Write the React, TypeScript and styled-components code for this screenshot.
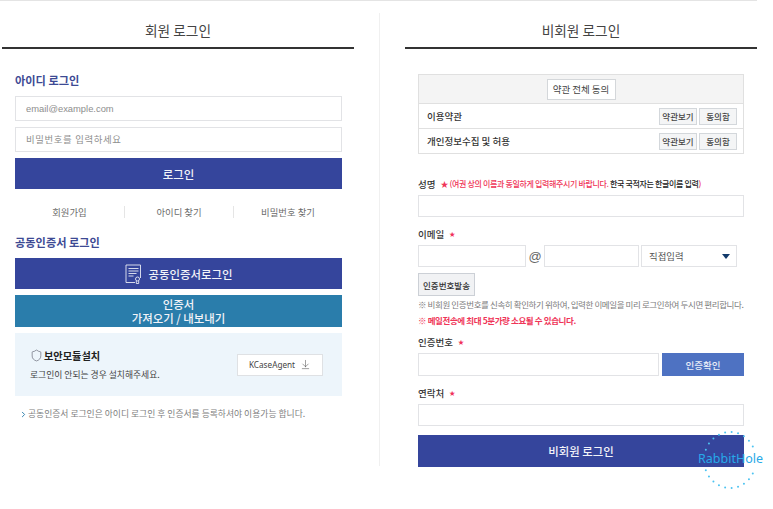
import React from 'react';
import styled, { createGlobalStyle } from 'styled-components';
import { ArrowDownToLine, Shield, ChevronRight } from 'lucide-react';

const GlobalStyle = createGlobalStyle`
  html, body {
    margin: 0;
    padding: 0;
    background: #fff;
  }
  body {
    font-family: "Noto Sans CJK KR", "Noto Sans", sans-serif;
    color: #333;
  }
  * {
    box-sizing: border-box;
  }
`;

const Page = styled.div`
  position: relative;
  width: 773px;
  height: 509px;
  overflow: hidden;
`;

const TopRule = styled.div`
  width: 757px;
  height: 1px;
  background: #e4e4e4;
`;

const Columns = styled.div`
  display: grid;
  grid-template-columns: 380px 393px;
  padding-top: 12px;
`;

const LeftColumn = styled.section`
  height: 453px;
  padding-left: 2px;
  border-right: 1px solid #f0f0f0;
`;

const RightColumn = styled.section`
  padding-left: 25px;
`;

const PanelTitle = styled.h2`
  width: 352px;
  height: 36px;
  margin: 0;
  padding-top: 5px;
  border-bottom: 2px solid #333;
  font-size: 13.7px;
  line-height: 24px;
  font-weight: 400;
  color: #444;
  text-align: center;
`;

const LeftBody = styled.div`
  width: 327px;
  margin: 23px 0 0 13px;
`;

const RightBody = styled.div`
  width: 326px;
  margin: 25px 0 0 13px;
`;

const SectionTitle = styled.h3`
  margin: 0 0 7px;
  font-size: 11.2px;
  line-height: 17px;
  font-weight: 700;
  color: #3d4a94;
`;

const TextField = styled.input<{ $w?: number; $h?: number }>`
  display: block;
  width: ${p => (p.$w ? `${p.$w}px` : '100%')};
  height: ${p => p.$h ?? 25}px;
  padding: 0 10px;
  border: 1px solid #e2e3e6;
  background: #fff;
  font-family: "Liberation Sans", "Noto Sans CJK KR", sans-serif;
  font-size: 9.4px;
  outline: none;
  &::placeholder {
    color: #8e8e8e;
    opacity: 1;
  }
`;

const PasswordField = styled(TextField)`
  letter-spacing: 0.6px;
`;

const FieldStack = styled.div`
  display: flex;
  flex-direction: column;
  gap: 6px;
`;

const PrimaryButton = styled.button<{ $h: number; $bg?: string }>`
  display: flex;
  align-items: center;
  justify-content: center;
  gap: 7px;
  width: 100%;
  height: ${p => p.$h}px;
  padding: 0;
  border: 0;
  background: ${p => p.$bg ?? '#35459c'};
  color: #f2f3f8;
  font-family: inherit;
  font-size: 11.4px;
  line-height: 14px;
  font-weight: 500;
`;

const LinkRow = styled.nav`
  display: grid;
  grid-template-columns: repeat(3, 1fr);
  margin: 17px 0 16px;
`;

const LinkItem = styled.a`
  height: 12px;
  font-size: 9.4px;
  line-height: 12px;
  color: #6b6b6b;
  text-align: center;
  & + & {
    border-left: 1px solid #e5e5e5;
  }
`;

const CertStack = styled.div`
  display: flex;
  flex-direction: column;
  gap: 6px;
`;

const InstallBox = styled.div`
  display: flex;
  align-items: center;
  justify-content: space-between;
  height: 63px;
  padding: 0 19px 0 15px;
  background: #edf5fb;
`;

const InstallHeading = styled.div`
  display: flex;
  align-items: center;
  gap: 1px;
  font-size: 10.2px;
  line-height: 14px;
  font-weight: 700;
  color: #222;
`;

const InstallText = styled.p`
  margin: 6px 0 0;
  font-size: 8.8px;
  line-height: 12px;
  color: #444;
`;

const AgentButton = styled.button`
  display: flex;
  align-items: center;
  justify-content: center;
  gap: 5px;
  width: 86px;
  height: 22px;
  padding: 0;
  border: 1px solid #dfe1e4;
  background: #fff;
  font-family: "Noto Sans", sans-serif;
  font-size: 8.2px;
  color: #444;
`;

const CertNote = styled.p`
  display: flex;
  align-items: center;
  margin: 11px 0 0;
  padding-left: 4px;
  font-size: 8.8px;
  line-height: 14px;
  color: #808080;
`;

const TermsTable = styled.div`
  border: 1px solid #e0e0e0;
`;

const TermsHead = styled.div`
  display: flex;
  align-items: center;
  justify-content: center;
  height: 28px;
  background: #f4f4f4;
`;

const AgreeAllButton = styled.button`
  width: 69px;
  height: 21px;
  padding: 0;
  border: 1px solid #d4d7da;
  background: #fff;
  font-family: inherit;
  font-size: 9.5px;
  color: #444;
`;

const TermsRow = styled.div`
  display: flex;
  align-items: center;
  justify-content: space-between;
  height: 25px;
  padding: 0 6px 0 8px;
  border-top: 1px solid #e0e0e0;
  font-size: 9.5px;
  font-weight: 500;
  color: #333;
`;

const TermsActions = styled.div`
  display: flex;
  gap: 2px;
`;

const SmallButton = styled.button`
  width: 38px;
  height: 17px;
  padding: 0;
  border: 1px solid #d3d7db;
  background: #f4f5f6;
  font-family: inherit;
  font-size: 8.5px;
  font-weight: 500;
  color: #444;
`;

const FieldLabel = styled.div<{ $top: number }>`
  display: flex;
  align-items: center;
  gap: 5px;
  height: 14px;
  margin: ${p => p.$top}px 0 4px;
  font-size: 9.5px;
  line-height: 14px;
  font-weight: 500;
  color: #333;
`;

const Star = styled.span`
  color: #f0325a;
  font-size: 6px;
  line-height: 14px;
`;

const LabelHint = styled.span`
  font-size: 8px;
  letter-spacing: -0.35px;
  font-weight: 500;
  color: #222;
  em {
    font-style: normal;
    color: #ef3558;
  }
`;

const InlineRow = styled.div`
  display: flex;
  align-items: center;
`;

const AtSign = styled.span`
  width: 18px;
  font-family: "Liberation Sans", sans-serif;
  font-size: 13px;
  color: #666;
  text-align: center;
`;

const SelectBox = styled.div`
  display: flex;
  align-items: center;
  justify-content: space-between;
  width: 96px;
  height: 22px;
  margin-left: 2px;
  padding: 0 6px 0 7px;
  border: 1px solid #e2e3e6;
  font-size: 9.4px;
  color: #555;
`;

const Caret = styled.span`
  width: 0;
  height: 0;
  border-left: 4px solid transparent;
  border-right: 4px solid transparent;
  border-top: 5px solid #123a6b;
`;

const SendCodeButton = styled.button`
  display: block;
  width: 57px;
  height: 23px;
  margin-top: 6px;
  padding: 0;
  border: 1px solid #ccd0d6;
  background: #f1f2f4;
  font-family: inherit;
  font-size: 8.5px;
  font-weight: 500;
  color: #333;
`;

const Notice = styled.p<{ $alert?: boolean }>`
  margin: ${p => (p.$alert ? '3px' : '2px')} 0 0;
  font-size: 8.5px;
  line-height: 13px;
  letter-spacing: -0.4px;
  white-space: nowrap;
  font-weight: ${p => (p.$alert ? 700 : 400)};
  color: ${p => (p.$alert ? '#ef3558' : '#7b7b7b')};
`;

const ConfirmButton = styled.button`
  width: 82px;
  height: 23px;
  margin-left: 3px;
  padding: 0;
  border: 0;
  background: #4e72c2;
  font-family: inherit;
  font-size: 9.5px;
  font-weight: 500;
  color: #e9eef8;
`;

const GuestLogin = styled(PrimaryButton)`
  margin-top: 9px;
`;

const Watermark = styled.div`
  position: absolute;
  left: 697px;
  top: 431px;
  width: 66px;
  height: 60px;
  color: #27a9e8;
  svg {
    position: absolute;
    inset: 0;
  }
`;

const WatermarkText = styled.span`
  position: absolute;
  left: 1px;
  top: 19px;
  font-family: "Noto Sans", sans-serif;
  font-size: 12.5px;
  line-height: 18px;
  white-space: nowrap;
`;

// 점선 원: 글자가 지나가는 좌우 구간은 비워 둠
const ringDots = Array.from({ length: 25 }, (_, i) => (i * 360) / 25)
  .filter(deg => Math.abs(Math.sin((deg * Math.PI) / 180)) > 0.3)
  .map(deg => ({
    cx: 33 + 26 * Math.cos((deg * Math.PI) / 180),
    cy: 29 + 28 * Math.sin((deg * Math.PI) / 180),
  }));

const CertIcon = () => (
  <svg width="17" height="20" viewBox="0 0 17 20" fill="none" stroke="#e8eaf4" strokeWidth="0.9">
    <path d="M10 18.5H1V1h14.5v13" />
    <path d="M3.5 4.5h10M3.5 7h10M3.5 9.5h8M3.5 12h5" />
    <circle cx="12.5" cy="15" r="2" />
    <path d="M11.3 17v2.5h2.4V17" />
  </svg>
);

export default function App() {
  return (
    <Page>
      <GlobalStyle />
      <TopRule />
      <Columns>
        <LeftColumn>
          <PanelTitle>회원 로그인</PanelTitle>
          <LeftBody>
            <SectionTitle>아이디 로그인</SectionTitle>
            <FieldStack>
              <TextField placeholder="email@example.com" />
              <PasswordField placeholder="비밀번호를 입력하세요" />
              <PrimaryButton $h={31}>로그인</PrimaryButton>
            </FieldStack>
            <LinkRow>
              <LinkItem>회원가입</LinkItem>
              <LinkItem>아이디 찾기</LinkItem>
              <LinkItem>비밀번호 찾기</LinkItem>
            </LinkRow>
            <SectionTitle>공동인증서 로그인</SectionTitle>
            <CertStack>
              <PrimaryButton $h={31}>
                <CertIcon />
                공동인증서로그인
              </PrimaryButton>
              <PrimaryButton $h={32} $bg="#2a7dab">
                인증서
                <br />
                가져오기 / 내보내기
              </PrimaryButton>
              <InstallBox>
                <div>
                  <InstallHeading>
                    <Shield size={13} strokeWidth={1} color="#445" />
                    보안모듈설치
                  </InstallHeading>
                  <InstallText>로그인이 안되는 경우 설치해주세요.</InstallText>
                </div>
                <AgentButton>
                  KCaseAgent
                  <ArrowDownToLine size={11} strokeWidth={1.1} color="#444" />
                </AgentButton>
              </InstallBox>
            </CertStack>
            <CertNote>
              <ChevronRight size={9} strokeWidth={2.5} color="#2a7dab" />
              공동인증서 로그인은 아이디 로그인 후 인증서를 등록하셔야 이용가능 합니다.
            </CertNote>
          </LeftBody>
        </LeftColumn>
        <RightColumn>
          <PanelTitle>비회원 로그인</PanelTitle>
          <RightBody>
            <TermsTable>
              <TermsHead>
                <AgreeAllButton>약관 전체 동의</AgreeAllButton>
              </TermsHead>
              <TermsRow>
                이용약관
                <TermsActions>
                  <SmallButton>약관보기</SmallButton>
                  <SmallButton>동의함</SmallButton>
                </TermsActions>
              </TermsRow>
              <TermsRow>
                개인정보수집 및 허용
                <TermsActions>
                  <SmallButton>약관보기</SmallButton>
                  <SmallButton>동의함</SmallButton>
                </TermsActions>
              </TermsRow>
            </TermsTable>

            <FieldLabel $top={23}>
              성명
              <LabelHint>
                <em>★ (여권 상의 이름과 동일하게 입력해주시기 바랍니다.</em> 한국 국적자는 한글이름 입력<em>)</em>
              </LabelHint>
            </FieldLabel>
            <TextField $w={326} $h={22} />

            <FieldLabel $top={10}>
              이메일 <Star>★</Star>
            </FieldLabel>
            <InlineRow>
              <TextField $w={108} $h={22} />
              <AtSign>@</AtSign>
              <TextField $w={95} $h={22} />
              <SelectBox>
                직접입력
                <Caret />
              </SelectBox>
            </InlineRow>
            <SendCodeButton>인증번호발송</SendCodeButton>
            <Notice>※ 비회원 인증번호를 신속히 확인하기 위하여, 입력한 이메일을 미리 로그인하여 두시면 편리합니다.</Notice>
            <Notice $alert>※ 메일전송에 최대 5분가량 소요될 수 있습니다.</Notice>

            <FieldLabel $top={8}>
              인증번호 <Star>★</Star>
            </FieldLabel>
            <InlineRow>
              <TextField $w={241} $h={23} />
              <ConfirmButton>인증확인</ConfirmButton>
            </InlineRow>

            <FieldLabel $top={10}>
              연락처 <Star>★</Star>
            </FieldLabel>
            <TextField $w={326} $h={22} />
            <GuestLogin $h={32}>비회원 로그인</GuestLogin>
          </RightBody>
        </RightColumn>
      </Columns>
      <Watermark>
        <svg width="66" height="60" viewBox="0 0 66 60">
          {ringDots.map((d, i) => (
            <circle key={i} cx={d.cx} cy={d.cy} r="1" fill="#4cc3f1" />
          ))}
        </svg>
        <WatermarkText>RabbitHole</WatermarkText>
      </Watermark>
    </Page>
  );
}
